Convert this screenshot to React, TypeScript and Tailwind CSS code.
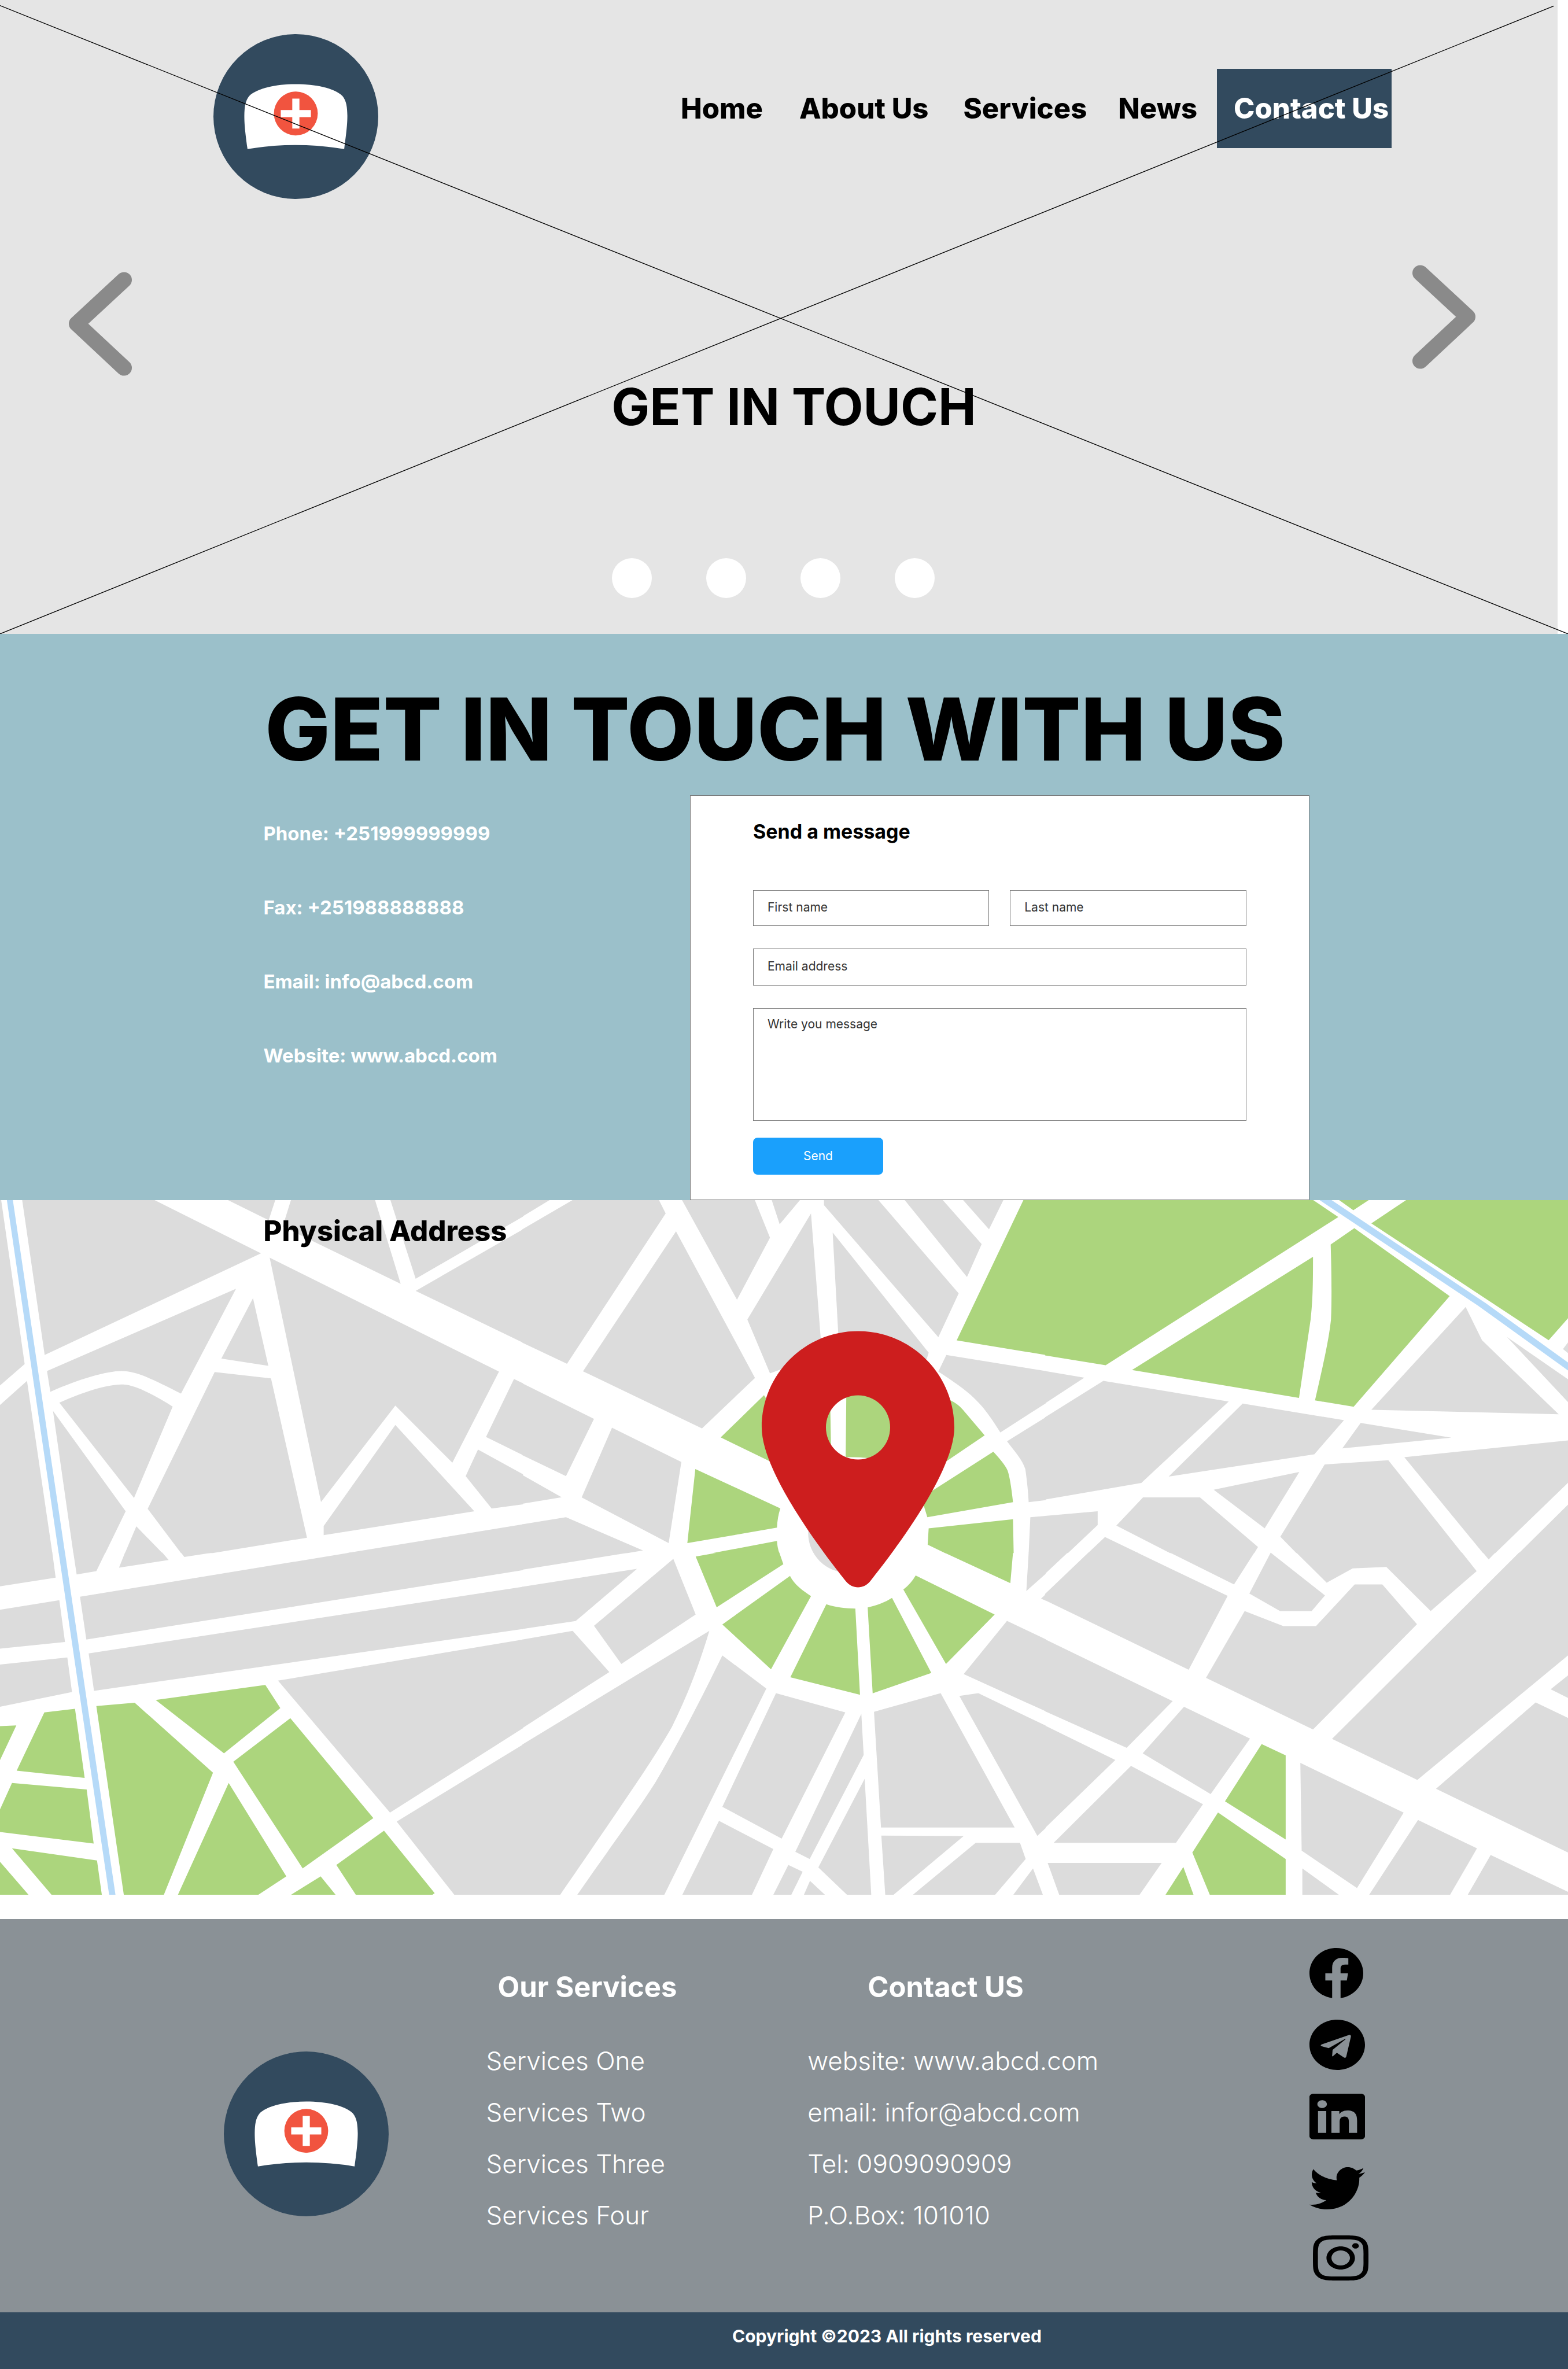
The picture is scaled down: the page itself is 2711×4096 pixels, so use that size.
import React from "react";
import { FaFacebook, FaTelegram, FaLinkedin, FaTwitter, FaInstagram } from "react-icons/fa";

/* ---------- Brand mark ---------- */

function Logo({ className }: { className: string }) {
  return (
    <svg viewBox="114 107 1248 1248" className={className} role="img" aria-label="Clinic logo">
      <circle cx="738" cy="731" r="624" fill="#324a5e" />
      <path
        fill="#fff"
        d="M372 977C355 850 348 790 348 725C349 660 355 610 385 575C450 515 590 486 738 486C886 486 1026 515 1091 575C1121 610 1127 660 1128 725C1128 790 1121 850 1104 977Q920 947 738 947Q556 947 372 977Z"
      />
      <circle cx="738" cy="708" r="166" fill="#f1543f" />
      <path fill="#fff" d="M711 595H765V682H852V735H765V822H711V735H624V682H711Z" />
    </svg>
  );
}

/* ---------- Hero ---------- */

function Chevron({ points }: { points: string }) {
  return (
    <svg viewBox="0 0 160 263" className="h-[180px] w-[109px]" aria-hidden="true">
      <polyline
        points={points}
        fill="none"
        stroke="#8a8a8a"
        strokeWidth="40"
        strokeLinecap="round"
        strokeLinejoin="round"
      />
    </svg>
  );
}

function Hero() {
  return (
    <header className="relative border-r-[18px] border-white bg-[#e5e5e5] pb-[62px]">
      <div className="-mr-[18px]">
        <div className="flex items-start justify-between pt-[59px] pr-[11.25%] pl-[13.6%]">
          <Logo className="size-[285px]" />
          <nav className="mt-[60px] flex items-center text-[49px] leading-[60px] font-extrabold">
            <a href="#home" className="mr-[63px]">Home</a>
            <a href="#about" className="mr-[60px]">About Us</a>
            <a href="#services" className="mr-[54px]">Services</a>
            <a href="#news" className="mr-[34px]">News</a>
            <a
              href="#contact"
              className="flex h-[137px] w-[302px] items-center justify-center bg-[#324a5e] pl-6 whitespace-nowrap text-white"
            >
              Contact Us
            </a>
          </nav>
        </div>

        <div className="mt-[114px] flex items-start justify-between pr-[5.9%] pl-[4.4%]">
          <button type="button" aria-label="Previous slide" className="mt-[12px]">
            <Chevron points="140,20 20,131 140,243" />
          </button>
          <button type="button" aria-label="Next slide">
            <Chevron points="20,20 140,131 20,243" />
          </button>
        </div>

        <p className="mt-[3px] pl-[34px] text-center text-[88px] leading-[100px] font-bold">
          GET IN TOUCH
        </p>

        <div className="mt-[212px] flex justify-center gap-[94px] pr-[38px]">
          {[1, 2, 3, 4].map((n) => (
            <button
              key={n}
              type="button"
              aria-label={`Slide ${n}`}
              className="size-[69px] rounded-full bg-white"
            />
          ))}
        </div>
      </div>
      <svg
        viewBox="0 0 3960 1600"
        preserveAspectRatio="none"
        className="pointer-events-none absolute top-0 left-0 h-full w-screen"
        aria-hidden="true"
      >
        <path d="M0 14L3960 1600M0 1600L3924 15" stroke="#000" strokeWidth="2" fill="none" />
      </svg>
    </header>
  );
}

/* ---------- Contact ---------- */

const contactLines = [
  "Phone: +251999999999",
  "Fax: +251988888888",
  "Email: info@abcd.com",
  "Website: www.abcd.com",
];

const fieldClass =
  "block w-full border border-[#777] bg-white pl-6 text-[21px] leading-[28px] text-[#333] placeholder:text-[#333] placeholder:opacity-100";

function MessageForm() {
  return (
    <form
      className="border border-[#777] bg-white px-[10.1%] pt-[40px] pb-[43px]"
      onSubmit={(e) => e.preventDefault()}
    >
      <h2 className="text-[34px] leading-[44px] font-bold">Send a message</h2>
      <div className="mt-[79px] grid grid-cols-2 gap-x-[36px] gap-y-[39px]">
        <input aria-label="First name" placeholder="First name" className={`${fieldClass} h-[62px] pb-1`} />
        <input aria-label="Last name" placeholder="Last name" className={`${fieldClass} h-[62px] pb-1`} />
        <input
          type="email"
          aria-label="Email address"
          placeholder="Email address"
          className={`${fieldClass} col-span-2 h-[64px] pb-1`}
        />
        <textarea
          aria-label="Write you message"
          placeholder="Write you message"
          className={`${fieldClass} col-span-2 h-[195px] resize-none pt-[13px]`}
        />
      </div>
      <button
        type="submit"
        className="mt-[29px] block h-[64px] w-[225px] rounded-lg bg-[#1aa0fc] text-[21px] text-white"
      >
        Send
      </button>
    </form>
  );
}

function Contact() {
  return (
    <section className="bg-[#9bc0ca] pt-[90px]">
      <h1 className="pl-[16.9%] text-[150px] leading-[150px] font-extrabold whitespace-nowrap">
        GET IN TOUCH WITH US
      </h1>
      <div className="mt-[39px] grid grid-cols-[16.8%_27.2%_39.5%]">
        <ul className="col-start-2 flex flex-col gap-[88px] pt-[46px] text-[33px] leading-[40px] font-bold text-white">
          {contactLines.map((line) => (
            <li key={line}>{line}</li>
          ))}
        </ul>
        <MessageForm />
      </div>
    </section>
  );
}

/* ---------- Map ---------- */

type Sheet = { at: string; land: string[]; park: string[]; water: string[] };

/* Six map sheets, three across and two down. Each sheet uses its own 1568-unit grid. */
const sheets: Sheet[] = [
  {
    at: "translate(0 3020) scale(0.84184 0.57398)",
    land: [
      "M0 10L3 10 74 737 0 831Z",
      "M0 917L81 811 157 1569 0 1569Z",
      "M66 10L456 10 783 250 134 697Z",
      "M676 10L827 10 806 104Z",
      "M874 10L1124 10 1202 384 848 132Z",
      "M1170 10L1569 10 1569 88 1247 362Z",
      "M1247 415L1569 144 1569 643Z",
      "M141 768L708 406 543 867C460 805 410 768 365 768C320 768 240 802 151 859Z",
      "M759 447L805 745 664 713Z",
      "M178 907C250 860 325 824 370 827C410 830 470 880 518 924L402 1326Z",
      "M644 772L813 800 921 1501 638 1569 543 1569 443 1374Z",
      "M159 943L377 1385 316 1569 220 1569Z",
      "M409 1451L487 1569 375 1569Z",
      "M809 269L1497 770 1357 1171 1186 920 963 1344Z",
      "M1186 1005L1423 1385 971 1490 971 1450Z",
      "M1569 1354L1475 1373 1397 1230 1434 1113 1569 1222Z",
      "M1542 803L1569 822 1569 1138 1458 1058Z",
      "M1569 1442L1040 1569 1569 1569Z",
    ],
    park: [],
    water: ["M20 10L38 10 195 1569 176 1569Z"],
  },
  {
    at: "translate(1320 3020) scale(0.84184 0.57398)",
    land: [
      "M-1 10L87 10 -1 88Z",
      "M156 10L407 10 429 74 133 736 -1 643 -1 144Z",
      "M460 153L697 798 538 1020 181 769Z",
      "M476 10L695 10 742 181 643 454Z",
      "M746 10L835 10 771 122Z",
      "M865 74L895 640 885 700 772 762 742 778 674 541Z",
      "M904 10L1064 10 1308 426 1247 619 904 38Z",
      "M930 158L1218 687 1212 716 1100 700 947 610Z",
      "M1143 10L1257 10 1377 209 1333 354Z",
      "M1318 10L1444 10 1399 144Z",
      "M1271 697L1569 768 1569 910 1433 1038C1400 960 1378 920 1355 888C1330 850 1290 812 1247 770Z",
      "M1569 971L1569 1336 1518 1345C1516 1290 1512 1240 1508 1200C1500 1160 1475 1120 1453 1077Z",
      "M1569 1405L1523 1411 1518 1569 1569 1569Z",
      "M-1 822L214 978 130 1230 -1 1138Z",
      "M-1 1225L117 1323 -1 1352Z",
      "M268 1017L476 1168 438 1525 177 1324Z",
      "M-1 1442L130 1411 361 1557 315 1569 -1 1569Z",
    ],
    park: [
      "M1504 10L1569 10 1569 697 1302 633Z",
      "M724 874L760 960 760 1178 594 1060Z",
      "M518 1199L773 1372Q764 1412 763 1457L494 1525Z",
      "M570 1569L763 1515Q764 1545 770 1569Z",
      "M1283 896Q1306 912 1320 937L1386 1051 1270 1166 1230 1000Z",
      "M1412 1123Q1448 1180 1455 1207Q1463 1240 1471 1345L1214 1411 1203 1358 1180 1340Z",
      "M1218 1460L1471 1420 1473 1569 1267 1569 1215 1532Z",
      "M900 860L922 860 925 1100 900 1100Z",
      "M971 860L1110 860 1110 1160 1040 1152Q1020 1146 969 1146Z",
    ],
    water: [],
  },
  {
    at: "translate(2640 3020) scale(0.84184 0.57398)",
    land: [
      "M-1 768L117 797 -1 910Z",
      "M174 811L550 902 288 1260 -1 1333 -1 971Z",
      "M592 911L896 984 807 1134 370 1232Z",
      "M946 996L1218 1061 891 1108Z",
      "M1261 486L1310 632 1540 958 978 938Z",
      "M1385 618L1569 805 1569 906Z",
      "M1569 640L1553 671 1569 690Z",
      "M1569 1073L1077 1147 1313 1569 1350 1569 1569 1258Z",
      "M1569 1354L1421 1569 1569 1569Z",
      "M762 1212L658 1460 505 1290Z",
      "M838 1179L1029 1160 1250 1569 753 1569 705 1497Z",
      "M293 1324L464 1324 638 1542 627 1569 374 1569 213 1448Z",
      "M-1 1405L157 1385 157 1445 68 1569 -1 1569Z",
      "M179 1498L279 1569 128 1569Z",
    ],
    park: [
      "M-1 10L798 10 879 90 181 742 -1 699Z",
      "M876 10L976 10 924 60Z",
      "M1088 10L1569 10 1569 534 1510 632 978 118Z",
      "M803 265C803 400 802 460 796 540L761 886 260 763Z",
      "M927 139L1213 438 925 925 809 897C830 760 850 640 857 540C860 440 858 300 856 211Z",
    ],
    water: ["M817 10L853 10 1322 470 1569 731 1569 766 1298 480Z"],
  },
  {
    at: "translate(0 3920) scale(0.84184 0.57398)",
    land: [
      "M0 -1L157 -1 167 109 0 147Z",
      "M220 -1L316 -1 289 80 230 95Z",
      "M375 -1L487 -1 506 31 357 65Z",
      "M543 -1L638 -1 553 18Z",
      "M1050 -1L1569 -1 1569 76 259 381 240 193Z",
      "M0 250L178 208 195 392 0 421Z",
      "M1569 149L1569 335 282 607 266 442Z",
      "M0 491L202 460 216 612 0 677Z",
      "M1569 381L1569 771 1170 1143 834 562Z",
      "M1569 843L1569 1510 1366 1510 1190 1182Z",
    ],
    park: [
      "M0 762L49 759 0 912Z",
      "M133 702L225 686 254 990 50 958Z",
      "M289 674L404 659 639 967 490 1510 372 1510Z",
      "M467 647L796 581 841 683 672 882Z",
      "M871 727L1120 1167 908 1388 700 919Z",
      "M686 1012L859 1423 769 1510 532 1510Z",
      "M962 1423L1010 1510 867 1510Z",
      "M1152 1222L1304 1497 1292 1510 1070 1510 1009 1373Z",
      "M36 1012L260 1041 281 1279 0 1228 0 1129Z",
      "M36 1300L291 1353 306 1510 158 1510Z",
      "M0 1359L89 1510 0 1510Z",
    ],
    water: ["M176 -1L195 -1 347 1510 328 1510Z"],
  },
  {
    at: "translate(1320 3920) scale(0.84184 0.57398)",
    land: [
      "M-1 -1L319 -1 -1 74Z",
      "M-1 149L343 70 159 300 -1 335Z",
      "M452 26L519 271 296 489 214 321Z",
      "M-1 381L150 343 260 524 -1 771Z",
      "M560 343C520 540 480 670 448 765C400 890 330 1040 110 1510L-1 1510 -1 843Z",
      "M599 451L731 597 423 1510 161 1510C300 1220 360 1100 400 1005C450 880 520 690 599 451Z",
      "M760 617L968 702 777 1257 599 1117Z",
      "M589 1179L752 1303 686 1510 477 1510Z",
      "M1016 708L1023 889 861 1347 818 1315Z",
      "M1026 994L1046 1510 977 1510 887 1384Z",
      "M797 1373L840 1403 804 1510 750 1510Z",
      "M862 1443L911 1510 842 1510Z",
      "M1054 699L1254 617 1476 1208 1075 1208Z",
      "M1076 1244L1323 1246 1108 1510 1088 1510Z",
      "M1359 1276L1492 1276 1509 1347 1414 1510 1166 1510Z",
      "M1531 1388L1562 1510 1469 1510Z",
      "M1310 629L1367 617 1569 760 1569 1211 1544 1245Z",
      "M1453 299L1569 380 1569 697 1323 533Z",
      "M1518 -1L1569 -1 1569 92 1511 168Z",
      "M1555 201L1569 182 1569 210Z",
    ],
    park: [
      "M519 16L585 -1 770 -1 782 50 582 239Z",
      "M802 101C815 140 840 165 865 190L745 512 599 315Z",
      "M911 226C940 240 970 245 998 245L1012 624 803 547Z",
      "M1035 240Q1080 225 1108 198L1226 528 1050 618Z",
      "M1179 99L1416 271 1270 489 1142 161Q1165 135 1179 99Z",
      "M1265 -1L1471 -1 1463 133Z",
    ],
    water: [],
  },
  {
    at: "translate(2640 3920) scale(0.84184 0.57398)",
    land: [
      "M-1 -1L67 -1 -1 92Z",
      "M129 -1L276 -1 547 189 430 514 -1 208 -1 181Z",
      "M374 -1L627 -1 566 139Z",
      "M676 -1L839 187 799 256 704 256 612 179Z",
      "M753 -1L1250 -1 1294 80 1156 256 1023 62 922 68 844 131Z",
      "M1313 -1L1350 -1 1330 29Z",
      "M1421 -1L1569 -1 1569 450 1116 999 860 818Z",
      "M598 256L714 322 812 322 928 139 1011 139 1115 314 803 777 482 550Z",
      "M1569 538L1569 639 1516 600Z",
      "M1471 658L1569 727 1569 1319 1172 1038Z",
      "M-1 380L382 652 244 858 -1 697Z",
      "M416 677L614 817 496 1061 292 882Z",
      "M-1 760L210 911 -1 1211Z",
      "M257 937L473 1106 392 1276 25 1276Z",
      "M7 1364L349 1364 280 1510 43 1510Z",
      "M765 924L1075 1143 935 1475 769 1310Z",
      "M771 1388L886 1510 771 1510Z",
      "M1118 1175L1295 1300 1212 1510 969 1510Z",
      "M1336 1329L1569 1492 1569 1510 1265 1510Z",
    ],
    park: [
      "M649 841L721 891 721 1261 539 1093Z",
      "M518 1142L721 1347 721 1510 495 1510 441 1318Z",
      "M414 1382L446 1510 358 1510Z",
    ],
    water: [],
  },
];

function AddressMap() {
  return (
    <section className="relative">
      <svg viewBox="0 3029 3960 1754" className="block w-full bg-white" role="img" aria-label="Street map">
        {sheets.map((sheet) => (
          <g key={sheet.at} transform={sheet.at}>
            <path fill="#dcdcdc" d={sheet.land.join("")} />
            <path fill="#acd57d" d={sheet.park.join("")} />
            <path fill="#b6daf8" d={sheet.water.join("")} />
          </g>
        ))}
        <circle cx="2141" cy="3870" r="100" fill="#dcdcdc" />
        <path
          transform="translate(1923.7 3359.8) scale(1.267)"
          fill="#cd1e1e"
          fillRule="evenodd"
          d="M215.7 499.2C267 435 384 279.4 384 192C384 86 298 0 192 0S0 86 0 192c0 87.4 117 243 168.3 307.2c12.3 15.3 35.1 15.3 47.4 0zM192 128a64 64 0 1 1 0 128 64 64 0 1 1 0-128z"
        />
      </svg>
      <h2 className="absolute top-6 left-[16.8%] text-[49px] leading-[60px] font-extrabold">Physical Address</h2>
    </section>
  );
}

/* ---------- Footer ---------- */

const services = ["Services One", "Services Two", "Services Three", "Services Four"];
const details = ["website: www.abcd.com", "email: infor@abcd.com", "Tel: 0909090909", "P.O.Box: 101010"];

const socials = [
  { name: "Facebook", Icon: FaFacebook, box: "8 8 496 494", size: "h-[87px] w-[93px]" },
  { name: "Telegram", Icon: FaTelegram, box: "0 8 496 496", size: "h-[87px] w-[96px]" },
  { name: "LinkedIn", Icon: FaLinkedin, box: "0 32 448 448", size: "h-[79px] w-[96px]" },
  { name: "Twitter", Icon: FaTwitter, box: "0 48 512 416", size: "h-[73px] w-[96px]" },
  { name: "Instagram", Icon: FaInstagram, box: "0 32 448 448", size: "mb-2 ml-1.5 h-[78px] w-[96px]" },
];

function Footer() {
  return (
    <footer className="mt-[42px] text-white">
      <div className="grid grid-cols-[31%_20.5%_32%_1fr] bg-[#8a9196] pb-[28px]">
        <div className="pt-[229px] pl-[46%]">
          <Logo className="size-[285px]" />
        </div>
        <section className="pt-[88px]">
          <h3 className="pl-5 text-[49px] leading-[60px] font-bold">Our Services</h3>
          <ul className="mt-[53px] text-[44px] leading-[89px] font-light">
            {services.map((s) => (
              <li key={s}>{s}</li>
            ))}
          </ul>
        </section>
        <section className="pt-[88px]">
          <h3 className="pl-[104px] text-[49px] leading-[60px] font-bold">Contact US</h3>
          <ul className="mt-[53px] text-[44px] leading-[89px] font-light">
            {details.map((d) => (
              <li key={d}>{d}</li>
            ))}
          </ul>
        </section>
        <ul className="pt-[32px] text-black">
          {socials.map(({ name, Icon, box, size }) => (
            <li key={name} className="flex h-[124px] items-center">
              <a href={`#${name.toLowerCase()}`} aria-label={name}>
                <Icon viewBox={box} preserveAspectRatio="none" className={size} />
              </a>
            </li>
          ))}
        </ul>
      </div>
      <p className="bg-[#324a5e] pt-[14px] pb-[30px] pl-[46.7%] text-[30px] leading-[55px] font-bold">
        Copyright ©2023 All rights reserved
      </p>
    </footer>
  );
}

export default function App() {
  return (
    <main className="w-full overflow-x-hidden bg-white font-['Inter',sans-serif] text-black">
      <Hero />
      <Contact />
      <AddressMap />
      <Footer />
    </main>
  );
}
